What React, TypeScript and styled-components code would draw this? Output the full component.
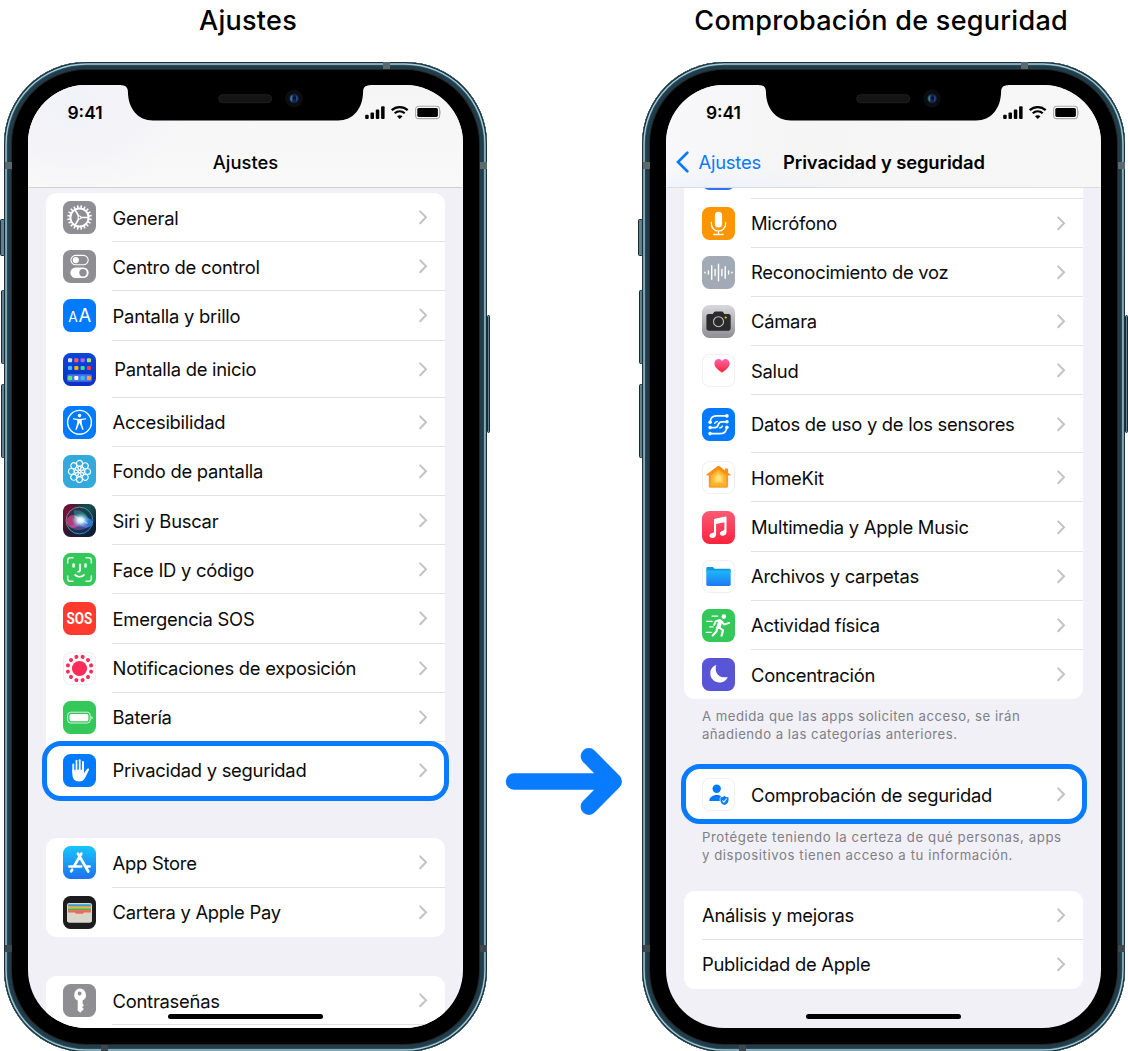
import React from "react";
import styled, { createGlobalStyle, css } from "styled-components";

const GlobalStyle = createGlobalStyle`
  * { box-sizing: border-box; }
  body { margin: 0; background: #fff; }
`;

const BLUE = "#087bff";

const Stage = styled.main`
  position: relative;
  display: flex;
  width: 1128px;
  height: 1051px;
  padding: 0 2.6px 0 4px;
  justify-content: space-between;
  overflow: hidden;
  background: #fff;
  color: #000;
  font-family: Inter, "Liberation Sans", sans-serif;
`;

const Column = styled.section`
  display: flex;
  flex-direction: column;
  flex: none;
  width: 483px;
`;

const Title = styled.h1<{ $shift: number }>`
  flex: none;
  margin: 0 0 0 ${(p) => p.$shift}px;
  height: 62px;
  padding-top: 5px;
  font-size: 27px;
  line-height: 32px;
  font-weight: 500;
  letter-spacing: 0.27px;
  text-align: center;
  white-space: nowrap;
`;

const Phone = styled.div`
  position: relative;
  flex: none;
  height: 990px;
  padding: 23px 24px 24px;
  border-radius: 82px;
  background: #000;
  box-shadow:
    inset 0 0 0 1.3px #19323d,
    inset 0 0 0 2.7px #a4cbd6,
    inset 0 0 0 3.4px #365a69,
    inset 0 0 0 7px #213d4c,
    inset 0 0 0 8px #252423;
`;

const SideButton = styled.span<{ $side: "left" | "right"; $top: number; $height: number; $out: number }>`
  position: absolute;
  ${(p) => p.$side}: ${(p) => -p.$out}px;
  top: ${(p) => p.$top}px;
  width: ${(p) => p.$out + 0.5}px;
  height: ${(p) => p.$height}px;
  border: 1px solid #162a34;
  border-radius: 1.5px;
  background: #64808f;
`;

const Antenna = styled.span<{ $x: number; $y: number; $dark?: boolean }>`
  position: absolute;
  left: ${(p) => p.$x}px;
  top: ${(p) => p.$y}px;
  width: 7px;
  height: 7px;
  background: ${(p) => (p.$dark ? "#3d484e" : "#5c6a70")};
`;

const Screen = styled.div`
  position: relative;
  display: flex;
  flex-direction: column;
  height: 943px;
  overflow: hidden;
  border-radius: 58px;
  background: #f1f0f6;
`;

const NotchArt = styled.svg`
  position: absolute;
  left: 0;
  top: 0;
  z-index: 2;
`;

const Header = styled.header<{ $tint?: boolean }>`
  flex: none;
  height: 103px;
  border-bottom: 1px solid ${(p) => (p.$tint ? "#dcdce0" : "#cfcfd4")};
  background: ${(p) =>
    p.$tint
      ? "radial-gradient(ellipse 120px 16px at 50px 100px, #edf3fc, rgba(237,243,252,0)), linear-gradient(90deg, #f8f8fa 0, #f5f5f6 30%, #f7f7f7 100%)"
      : "radial-gradient(ellipse 110px 90px at 45px 25px, #f1f1f9, rgba(241,241,249,0)), linear-gradient(#f5f5f6, #f9f9f9)"};
`;

const StatusBar = styled.div`
  display: flex;
  height: 55px;
  padding: 0 22px 0 39.5px;
  align-items: center;
  justify-content: space-between;
  font-size: 17.4px;
  font-weight: 600;
`;

const NavBar = styled.div`
  display: grid;
  grid-template-columns: 116px 1fr 116px;
  height: 44px;
  align-items: center;
`;

const BackLink = styled.span`
  display: flex;
  align-items: center;
  gap: 8.5px;
  padding-left: 9.5px;
  color: #0a7aff;
  font-size: 18.4px;
  letter-spacing: -0.2px;
`;

const NavTitle = styled.strong<{ $weight: number; $spacing: number }>`
  text-align: center;
  white-space: nowrap;
  font-size: 18.4px;
  font-weight: ${(p) => p.$weight};
  letter-spacing: ${(p) => p.$spacing}px;
`;

const Scroll = styled.div<{ $lead: number }>`
  flex: 1;
  min-height: 0;
  overflow: hidden;
  padding: 0 18px 0 17.5px;

  & > :first-child {
    margin-top: ${(p) => p.$lead}px;
  }
`;

const Card = styled.ul<{ $gap: number }>`
  list-style: none;
  margin: ${(p) => p.$gap}px 0 0;
  padding: 0;
  border-radius: 11px;
  background: #fff;
`;

const Item = styled.li<{ $height: number; $ring?: [number, number] }>`
  position: relative;
  display: flex;
  align-items: stretch;
  height: ${(p) => p.$height}px;
  padding-left: 17.7px;

  ${(p) =>
    p.$ring &&
    css`
      &::after {
        content: "";
        position: absolute;
        inset: ${-p.$ring[0]}px -4px ${-p.$ring[1]}px -3.2px;
        border: 5.5px solid ${BLUE};
        border-radius: 19px;
      }
    `}
`;

const Tile = styled.span<{ $bg: string; $outlined?: boolean }>`
  flex: none;
  align-self: center;
  width: 33px;
  height: 33px;
  margin-right: 16px;
  border-radius: 7.5px;
  background: ${(p) => p.$bg};
  box-shadow: ${(p) => (p.$outlined ? "inset 0 0 0 1px #f0f0f2" : "none")};

  svg {
    display: block;
    overflow: visible;
  }
`;

const ItemBody = styled.div<{ $line: boolean }>`
  display: flex;
  flex: 1;
  align-items: center;
  justify-content: space-between;
  padding-right: 17.5px;
  border-bottom: 1px solid ${(p) => (p.$line ? "#e2e2e5" : "transparent")};
`;

const Label = styled.span<{ $shift: number }>`
  padding-left: ${(p) => p.$shift}px;
  padding-top: 1px;
  font-size: 18.4px;
  line-height: 24px;
  letter-spacing: -0.26px;
  white-space: nowrap;
  color: #0b0b0b;
`;

const Footnote = styled.p<{ $gap: number }>`
  margin: ${(p) => p.$gap}px 0 0;
  padding-left: 18px;
  height: 36px;
  font-size: 13.2px;
  line-height: 18px;
  white-space: nowrap;
  color: #7f7f84;
`;

const Line = styled.span<{ $spacing: number }>`
  display: block;
  letter-spacing: ${(p) => p.$spacing}px;
`;

const HomeBar = styled.span`
  position: absolute;
  left: 140px;
  bottom: 9px;
  width: 155px;
  height: 5.5px;
  border-radius: 3px;
  background: #000;
`;

const Arrow = styled.svg`
  position: absolute;
  left: 500px;
  top: 742px;
`;

const Chevron = () => (
  <svg width="10" height="16" viewBox="0 0 10 16" fill="none" stroke="#c3c3c6" strokeWidth="2">
    <path d="M2.2 2.4 8 8.300l-5.800 5.900" strokeLinecap="round" />
  </svg>
);

const Svg = ({ children }: { children: React.ReactNode }) => (
  <svg width="33" height="33" viewBox="0 0 33 33" fill="none" stroke="none">
    {children}
  </svg>
);

const around = (n: number, start = 0) => Array.from({ length: n }, (_, i) => start + (360 / n) * i);

type Glyph = { bg: string; outlined?: boolean; art: React.ReactNode };

const glyphs: Record<string, Glyph> = {
  gear: {
    bg: "#8e8e93",
    art: (
      <g stroke="#fff">
        <circle cx="16.5" cy="16.5" r="9.1" strokeWidth="2" />
        {around(20, 9).map((a) => (
          <path key={a} d="M16.5 6.9V4.2" strokeWidth="1.6" transform={`rotate(${a} 16.5 16.5)`} />
        ))}
        {[90, 210, 330].map((a) => (
          <path key={a} d="M16.5 15V8" strokeWidth="1.7" transform={`rotate(${a} 16.5 16.5)`} />
        ))}
        <circle cx="16.5" cy="16.5" r="1.5" strokeWidth="1.1" />
      </g>
    ),
  },
  control: {
    bg: "#8e8e93",
    art: (
      <>
        <rect x="7.900" y="5.400" width="17.300" height="9.400" rx="4.700" stroke="#fff" strokeWidth="1.100" />
        <circle cx="12.800" cy="10.100" r="3.100" fill="#fff" />
        <rect x="7.400" y="17.600" width="18.300" height="10.400" rx="5.200" fill="#fff" />
        <circle cx="20" cy="22.800" r="3.700" fill="#8e8e93" />
      </>
    ),
  },
  display: {
    bg: "#007aff",
    art: (
      <g fill="#fff" fontFamily="Inter, sans-serif" fontWeight="400">
        <text x="5.300" y="23.300" fontSize="13.800">A</text>
        <text x="15.400" y="23.300" fontSize="18.400">A</text>
      </g>
    ),
  },
  home: {
    bg: "linear-gradient(#0a45dc, #0b32c4)",
    art: (
      <>
        <rect x="4" y="21.200" width="25" height="7.500" rx="2" fill="#4a74e6" />
        {[
          ["#ddd8cb", "#ff5b5f", "#b75cf5", "#b4e34c"],
          ["#2fc4f5", "#ffb300", "#35dda0", "#ff3a34"],
          ["#4df56c", "#ffffff", "#25c8f7", "#ff9d3d"],
        ].map((row, r) =>
          row.map((c, i) => (
            <rect key={`${r}${i}`} x={5 + i * 6.3} y={[5.2, 13, 22.9][r]} width="4.100" height="4.100" rx="1" fill={c} />
          )),
        )}
      </>
    ),
  },
  access: {
    bg: "#007aff",
    art: (
      <>
        <circle cx="16.500" cy="16.300" r="11.900" stroke="#fff" strokeWidth="1.400" />
        <circle cx="16.500" cy="9.600" r="1.800" fill="#fff" />
        <path
          d="M10.200 12.100c2.600.7 3.800.9 6.300.9s3.700-.2 6.300-.9l.3 1.100c-1.400.5-2.800.8-4.300 1-.1 2.700.1 4 1.900 9.200l-1.300.5-2.700-6.700h-.4l-2.700 6.700-1.300-.5c1.800-5.200 2-6.500 1.900-9.200-1.500-.2-2.900-.5-4.300-1z"
          fill="#fff"
        />
      </>
    ),
  },
  wallpaper: {
    bg: "#34aadc",
    art: (
      <g stroke="#fff" strokeWidth="1.100">
        {around(8).map((a) => (
          <circle key={a} cx="16.500" cy="8.400" r="3" transform={`rotate(${a} 16.5 16.5)`} />
        ))}
        {around(8).map((a) => (
          <ellipse key={a} cx="16.500" cy="13.200" rx="1.500" ry="2.300" strokeWidth=".9" transform={`rotate(${a} 16.5 16.5)`} />
        ))}
      </g>
    ),
  },
  siri: {
    bg: "radial-gradient(circle at 15% 25%, #7a1238 0, rgba(80,16,48,0) 50%), radial-gradient(circle at 75% 12%, #17524f 0, rgba(16,60,60,0) 45%), linear-gradient(100deg, #42122e, #102239 70%, #0b1b2c)",
    art: (
      <>
        <defs>
          <radialGradient id="siriCore">
            <stop offset="0" stopColor="#fff" />
            <stop offset=".35" stopColor="#d8f2ff" stopOpacity=".95" />
            <stop offset="1" stopColor="#5cbcf0" stopOpacity="0" />
          </radialGradient>
          <linearGradient id="siriRing" x1="0" y1="0" x2="1" y2=".6">
            <stop offset="0" stopColor="#d65b8e" />
            <stop offset=".45" stopColor="#35b99c" />
            <stop offset="1" stopColor="#3e7ee0" />
          </linearGradient>
        </defs>
        <circle cx="16.500" cy="16.500" r="13.400" fill="#163d5b" fillOpacity=".6" stroke="url(#siriRing)" strokeWidth=".9" />
        <ellipse cx="10.300" cy="17.500" rx="6.800" ry="6.400" fill="#e0407e" fillOpacity=".75" />
        <ellipse cx="23" cy="18.800" rx="6.500" ry="5" fill="#3a8df0" fillOpacity=".75" />
        <path d="M6 22c5-1 8-4 11-9 2 5 5 8 9 9-5 5-14 6-20 0z" fill="#a668de" fillOpacity=".4" />
        <path d="M11 6c8 0 12 3 14 8-5-1-11 0-14 3z" fill="#2ac2a4" fillOpacity=".4" />
        <ellipse cx="17.500" cy="16.200" rx="9" ry="7.500" fill="url(#siriCore)" />
        <path d="M12 12.500 24.500 19.500" stroke="#fff" strokeOpacity=".5" strokeWidth="1.200" />
      </>
    ),
  },
  face: {
    bg: "#34c759",
    art: (
      <g stroke="#fff" strokeWidth="1.500" strokeLinecap="round">
        <path d="M4.700 10V7.300A2.600 2.600 0 0 1 7.300 4.700H10M23 4.700h2.700a2.600 2.600 0 0 1 2.600 2.600V10M28.300 23v2.700a2.600 2.600 0 0 1-2.600 2.600H23M10 28.300H7.300a2.600 2.600 0 0 1-2.600-2.600V23" strokeOpacity=".85" />
        <path d="M10.600 11.600v2M22.500 11.600v2" strokeWidth="2.500" />
        <path d="M17 11.300v6c0 1-.6 1.400-1.800 1.400M12.200 22c2.500 2.200 6.200 2.200 8.700 0" strokeWidth="1.800" />
      </g>
    ),
  },
  sos: {
    bg: "#ff3b30",
    art: (
      <text x="3.600" y="22.300" fill="#fff" fontFamily="Roboto, sans-serif" fontWeight="700" fontSize="16.400" textLength="25.800" lengthAdjust="spacingAndGlyphs">
        SOS
      </text>
    ),
  },
  exposure: {
    bg: "#fff",
    outlined: true,
    art: (
      <g fill="#fb2d57">
        <circle cx="16.500" cy="16.500" r="7.600" />
        {around(12, 15).map((a) => (
          <circle key={a} cx="16.500" cy="4.500" r="2" transform={`rotate(${a} 16.5 16.5)`} />
        ))}
      </g>
    ),
  },
  battery: {
    bg: "#34c759",
    art: (
      <>
        <rect x="4.700" y="11.200" width="22.500" height="10.800" rx="3" stroke="#fff" strokeOpacity=".8" />
        <rect x="6.600" y="13" width="18.800" height="7.200" rx="1.500" fill="#fff" />
        <path d="M28.500 14.900c1.500.5 1.500 3 0 3.500z" fill="#fff" />
      </>
    ),
  },
  hand: {
    bg: "#007aff",
    art: (
      <>
        <path d="M10.400 18.500V10.500M13.500 17V7M16.700 17V6.300M19.900 17V8" stroke="#fff" strokeWidth="2.100" strokeLinecap="round" />
        <path
          d="M9.350 15.500h11.600v3.700l3-4.100c.8-1 2.500-.5 2 .8l-3.400 7.200c-1.400 3-3.500 4.500-6.500 4.500-4.500 0-6.700-3-6.700-7.500z"
          fill="#fff"
        />
        <path d="M11.950 8.500v7.800M15.100 7v8.800M18.300 7v8.800" stroke="#007aff" strokeWidth=".9" />
      </>
    ),
  },
  appstore: {
    bg: "linear-gradient(#1ac4fb, #1c72f1)",
    art: (
      <path
        d="M18.300 7.700 11.400 19.600M15 7.700 25.300 25.500M6.400 20.500h11.800M22.600 20.500h4M9.200 23.600l-1 1.700"
        stroke="#fff"
        strokeWidth="2.700"
        strokeLinecap="round"
      />
    ),
  },
  wallet: {
    bg: "#1c1c1e",
    art: (
      <>
        <rect x="4" y="7" width="25" height="19.500" rx="2.300" fill="#d9d7cb" />
        <path d="M5 10V9.400Q5 8.200 6.300 8.200h20.400Q28 8.200 28 9.400V10.800H5z" fill="#3a9bdc" />
        <path d="M5 10.400h23v2H5z" fill="#f9b32b" />
        <path d="M5 12.400h23v2.200H5z" fill="#43b649" />
        <path d="M5 14.300h23v3.500H5z" fill="#f2685b" />
        <path d="M4 16.500h6.800c1.400 0 1.800.7 2.600 1.700 1.600 2 4.600 2 6.200 0 .8-1 1.200-1.700 2.600-1.700H29v7.700q0 2.300-2.300 2.300H6.300Q4 26.500 4 24.200z" fill="#d9d7cb" />
      </>
    ),
  },
  key: {
    bg: "#8e8e93",
    art: (
      <path
        fillRule="evenodd"
        d="M16.600 4.600a6.400 6.400 0 0 1 3 12v3.100l1.400 1.500-1.900 2 1.700 1.900-3.600 3.600-2.500-2.200v-9.900a6.400 6.400 0 0 1 1.900-12zm0 3a1.900 1.900 0 1 0 0 3.800 1.900 1.900 0 0 0 0-3.800z"
        fill="#fff"
      />
    ),
  },
  contacts: { bg: "#2c74f5", art: null },
  mic: {
    bg: "#ff9500",
    art: (
      <>
        <rect x="12.900" y="4.800" width="7.200" height="15.800" rx="3.600" fill="#fff" />
        <path d="M9.400 15.500v1.500a7.100 7.100 0 0 0 14.200 0v-1.500M16.500 24.200v3.200M11.800 27.500h9.400" stroke="#fff" strokeWidth="1.300" strokeLinecap="round" />
      </>
    ),
  },
  wave: {
    bg: "#a2aab5",
    art: (
      <path
        d="M3 16.100v.8M6.400 14.900v3.200M9.700 9.800v13.400M13.100 13.500v6M16.500 8.300v16.400M19.900 13.300v6.400M23.200 10.800v11.400M26.600 14.900v3.200M30 16.100v.8"
        stroke="#fff"
        strokeWidth="1.400"
        strokeLinecap="round"
      />
    ),
  },
  camera: {
    bg: "linear-gradient(#d8d8dc, #8e8e94)",
    art: (
      <>
        <path
          d="M6.500 9h4.300l1.200-1.700q.5-.7 1.400-.7h6.400q.9 0 1.400.7L22.400 9h4.200q2.100 0 2.100 2.100v12.500q0 2.100-2.100 2.100H6.500q-2.100 0-2.100-2.100V11.100Q4.400 9 6.500 9z"
          fill="#2a2a2b"
        />
        <circle cx="16.500" cy="16.700" r="5" stroke="#c3c3c6" strokeWidth="1.100" />
        <circle cx="23.700" cy="12.500" r="1.100" fill="#ffcc00" />
      </>
    ),
  },
  heart: {
    bg: "#fff",
    outlined: true,
    art: (
      <>
        <defs>
          <linearGradient id="heartFill" x1="0" y1="0" x2="0" y2="1">
            <stop offset="0" stopColor="#ff63ad" />
            <stop offset="1" stopColor="#fb2434" />
          </linearGradient>
        </defs>
        <path d="M20 18.700c-4.200-3-7.600-5.500-7.600-9.200 0-4.800 5.500-6 7.600-2.500 2.100-3.500 7.600-2.300 7.600 2.500 0 3.700-3.400 6.200-7.600 9.200z" fill="url(#heartFill)" />
      </>
    ),
  },
  sensors: {
    bg: "#007aff",
    art: (
      <>
        <path
          d="M8.200 14.200C8.400 9.500 11 7.900 14.500 7.900h10.200M8.200 19.600h4.600c2.600 0 3-1.200 3.400-2.900.5-2 1.600-2.900 3.700-2.900h4.800M24.700 19.300c-.2 4.700-2.800 6.300-6.300 6.300H8.200"
          stroke="#fff"
          strokeWidth="1.700"
        />
        <path d="M12.600 15.500c.4-1.300 1.300-1.900 2.700-2M20.400 18c-.4 1.300-1.300 1.900-2.700 2" stroke="#fff" strokeWidth="1.300" strokeLinecap="round" />
        {[[24.9, 7.9], [8.1, 14.3], [24.9, 13.8], [8.1, 19.6], [24.9, 19.3], [8.1, 25.6]].map(([x, y]) => (
          <circle key={`${x}-${y}`} cx={x} cy={y} r="1.800" fill="#fff" />
        ))}
      </>
    ),
  },
  house: {
    bg: "#fff",
    outlined: true,
    art: (
      <>
        <defs>
          <linearGradient id="houseFill" x1="0" y1="0" x2="0" y2="1">
            <stop offset="0" stopColor="#f88a12" />
            <stop offset="1" stopColor="#fda32a" />
          </linearGradient>
        </defs>
        <path
          d="M15.700 5q.8-.6 1.600 0l5.700 4.400V8q0-.6.600-.6h1.900q.6 0 .6.600v3.700l2.300 1.800q.7.800-.2 1.100h-2.100v10.700q0 1.500-1.500 1.500H8.300q-1.500 0-1.500-1.500V14.600H4.700q-.9-.3-.2-1.100z"
          fill="url(#houseFill)"
        />
        <path d="M16.500 8.600 8.900 14.600v8.900q0 .9.900.9h13.400q.9 0 .9-.9v-8.900z" fill="#feb331" />
        <path d="m16.500 11.200-4.800 3.900v6.700h9.600v-6.700z" fill="#ffca4e" />
        <path d="m16.500 13.600-2.900 2.400v4.400h5.800V16z" fill="#ffe27c" />
      </>
    ),
  },
  music: {
    bg: "linear-gradient(#fb5b74, #fa233b)",
    art: (
      <path
        d="M12 8.800q0-.9.900-1.100l10.600-2.200q1-.2 1 .7v15.100c0 2-1.500 3.200-3.400 3.500-2 .3-3.400-.8-3.200-2.500.2-1.500 1.300-2.200 3-2.600 1.300-.3 1.500-.6 1.500-1.600v-6.800l-8.300 1.700v10.400c0 2-1.500 3.300-3.400 3.500-2 .3-3.400-.8-3.200-2.500.2-1.500 1.300-2.200 3-2.500 1.300-.3 1.500-.7 1.500-1.700z"
        fill="#fff"
      />
    ),
  },
  folder: {
    bg: "#fff",
    outlined: true,
    art: (
      <>
        <defs>
          <linearGradient id="folderFill" x1="0" y1="0" x2="0" y2="1">
            <stop offset="0" stopColor="#1cb8fb" />
            <stop offset="1" stopColor="#1d78f2" />
          </linearGradient>
        </defs>
        <path d="M4.300 12V8.400q0-1.300 1.300-1.300h5.200l1.900 1.600h14.700q1.300 0 1.300 1.300v2z" fill="#1398df" />
        <path d="M4.300 10.600h24.400v13.700q0 1.700-1.700 1.700H6q-1.700 0-1.700-1.700z" fill="url(#folderFill)" />
      </>
    ),
  },
  run: {
    bg: "#34c759",
    art: (
      <g stroke="#fff" strokeLinecap="round" strokeLinejoin="round">
        <circle cx="21.800" cy="7.600" r="2.300" fill="#fff" stroke="none" />
        <path d="M18.300 12.600 16.500 18" strokeWidth="4" />
        <path d="m17.800 11-4.200 1.300-1.400 3.600M19.800 12.400l2.200 3.200 5.200-1.700" strokeWidth="1.900" />
        <path d="m17.300 18.600 3.700 2.800-1.500 5.300M15.300 18.600l-.9 4-3.700 3.900" strokeWidth="2.200" />
        <path d="M10 7.100h5.700M4.700 12.400h5.500M7.700 17.800h3.600M4.200 23.300h5.200" strokeWidth="1.200" />
      </g>
    ),
  },
  moon: {
    bg: "#5856d6",
    art: <path d="M14.300 7C10.500 8.300 8.300 11.500 8.300 15.200c0 5.200 4 9.200 9.200 9.200 3.900 0 7-2.200 8.200-5.500-6.800 1.800-12-2.400-12-8.200 0-1.400.2-2.500.6-3.700z" fill="#fff" />,
  },
  safety: {
    bg: "#fff",
    outlined: true,
    art: (
      <>
        <circle cx="14.700" cy="10.800" r="4.200" fill="#007aff" />
        <path d="M7.300 22.900c0-3.500 3.300-5.900 7.300-5.900 1.900 0 3.500.5 4.800 1.400-1.300.4-1.700.9-1.700 1.800v2.700z" fill="#007aff" />
        <path d="M22.400 17.900c1.200.9 2.300 1.200 4.100 1.300v3c0 2.300-1.700 3.800-4.100 4.800-2.400-1-4-2.500-4-4.800v-3c1.800-.1 2.900-.4 4-1.300z" fill="#007aff" />
        <path d="m20.400 22.500 1.500 1.700 2.800-3.700" stroke="#fff" strokeWidth="1.100" />
      </>
    ),
  },
};

const StatusIcons = () => (
  <svg width="77" height="15" viewBox="0 0 77 15" fill="none">
    <rect x="1.200" y="9.700" width="3.500" height="4.300" rx="1" fill="#000" />
    <rect x="6.500" y="7.500" width="3.500" height="6.500" rx="1" fill="#000" />
    <rect x="11.800" y="4.500" width="3.500" height="9.500" rx="1" fill="#000" />
    <rect x="17.100" y="1.200" width="3.500" height="12.800" rx="1" fill="#000" />
    <path d="M27.700 5.100c4.500-4.100 11.500-4.100 16 0M30.700 8.300c2.900-2.600 7.100-2.600 10 0" stroke="#000" strokeWidth="2.200" />
    <path d="M33 11.200c1.600-1.300 3.900-1.300 5.500 0l-2.750 2.900z" fill="#000" />
    <rect x="51.600" y="1.300" width="24" height="12.300" rx="3.200" stroke="#aaa" strokeWidth="1.100" />
    <rect x="53.300" y="3" width="20.600" height="8.900" rx="1.600" fill="#000" />
    <path d="M76.500 5.500c1.100.5 1.100 3.500 0 4z" fill="#aaa" />
  </svg>
);

const Notch = () => (
  <NotchArt width="435" height="40" viewBox="0 0 435 40">
    <path d="M93-1V.2c4.500 0 6.800 2 6.900 6.300C100.200 24 110 35.500 125 35.500h185c15 0 24.800-11.500 25.100-29 .1-4.300 2.400-6.300 6.900-6.300V-1z" fill="#000" />
    <rect x="190.700" y="9.700" width="53" height="8" rx="4" fill="#141414" stroke="#242424" strokeWidth=".8" />
    <circle cx="266" cy="13.500" r="9" fill="#0c0d0f" />
    <circle cx="266" cy="13.500" r="4.800" fill="#14254a" />
    <path d="M264.500 10c-3 1-3.300 5.500-.3 7z" fill="#3d6f9e" />
    <path d="M268 10.500c2.500 1.200 2.600 4.800 0 6.200z" fill="#27408c" />
    <circle cx="266.600" cy="13" r="1.500" fill="#0a0c1c" />
  </NotchArt>
);

type Entry = { icon?: string; text: string; tall?: number; ring?: [number, number]; shift?: number };

const ROW = 49.2;

const SettingsCard = ({ gap, rows, openEnd }: { gap: number; rows: Entry[]; openEnd?: boolean }) => (
  <Card $gap={gap}>
    {rows.map((row, i) => {
      const glyph = row.icon ? glyphs[row.icon] : undefined;
      return (
        <Item key={row.text} $height={row.tall ?? ROW} $ring={row.ring}>
          {glyph && (
            <Tile $bg={glyph.bg} $outlined={glyph.outlined}>
              <Svg>{glyph.art}</Svg>
            </Tile>
          )}
          <ItemBody $line={openEnd || i < rows.length - 1}>
            <Label $shift={row.shift ?? 0.4}>{row.text}</Label>
            <Chevron />
          </ItemBody>
        </Item>
      );
    })}
  </Card>
);

const Hardware = () => (
  <>
    <SideButton $side="left" $top={157} $height={37} $out={4} />
    <SideButton $side="left" $top={228} $height={74} $out={3} />
    <SideButton $side="left" $top={322} $height={74} $out={3} />
    <SideButton $side="right" $top={253} $height={118} $out={3} />
    <Antenna $x={0.5} $y={100} />
    <Antenna $x={475.5} $y={100} />
    <Antenna $x={378.5} $y={0} />
    <Antenna $x={0.5} $y={883} $dark />
    <Antenna $x={475.5} $y={883} $dark />
    <Antenna $x={97} $y={983} $dark />
  </>
);

const Device = ({ header, tint, lead, children }: { header: React.ReactNode; tint?: boolean; lead: number; children: React.ReactNode }) => (
  <Phone>
    <Hardware />
    <Screen>
      <Notch />
      <Header $tint={tint}>
        <StatusBar>
          <span>9:41</span>
          <StatusIcons />
        </StatusBar>
        <NavBar>{header}</NavBar>
      </Header>
      <Scroll $lead={lead}>{children}</Scroll>
      <HomeBar />
    </Screen>
  </Phone>
);

export default function App() {
  return (
    <>
      <GlobalStyle />
      <Stage>
        <Column>
          <Title $shift={5}>Ajustes</Title>
          <Device
            lead={5}
            header={
              <>
                <span />
                <NavTitle $weight={500} $spacing={0}>Ajustes</NavTitle>
              </>
            }
          >
            <SettingsCard
              gap={5}
              rows={[
                { icon: "gear", text: "General" },
                { icon: "control", text: "Centro de control" },
                { icon: "display", text: "Pantalla y brillo" },
                { icon: "home", text: "Pantalla de inicio", tall: 57, shift: 2 },
                { icon: "access", text: "Accesibilidad" },
                { icon: "wallpaper", text: "Fondo de pantalla" },
                { icon: "siri", text: "Siri y Buscar" },
                { icon: "face", text: "Face ID y código" },
                { icon: "sos", text: "Emergencia SOS" },
                { icon: "exposure", text: "Notificaciones de exposición" },
                { icon: "battery", text: "Batería" },
                { icon: "hand", text: "Privacidad y seguridad", tall: 56.5, ring: [1, 2.7] },
              ]}
            />
            <SettingsCard
              gap={40}
              rows={[
                { icon: "appstore", text: "App Store" },
                { icon: "wallet", text: "Cartera y Apple Pay" },
              ]}
            />
            <SettingsCard gap={39.2} openEnd rows={[{ icon: "key", text: "Contraseñas" }, { text: " ", tall: 30 }]} />
          </Device>
        </Column>
        <Column>
          <Title $shift={-5.5}>Comprobación de seguridad</Title>
          <Device
            tint
            lead={-38.7}
            header={
              <>
                <BackLink>
                  <svg width="14" height="22" viewBox="0 0 14 22" fill="none" stroke="#0a7aff" strokeWidth="2.700" strokeLinecap="round">
                    <path d="M11.300 1.800 2 11l9.300 9.200" />
                  </svg>
                  Ajustes
                </BackLink>
                <NavTitle $weight={600} $spacing={-0.1}>Privacidad y seguridad</NavTitle>
              </>
            }
          >
            <SettingsCard
              gap={0}
              rows={[
                { icon: "contacts", text: " " },
                { icon: "mic", text: "Micrófono" },
                { icon: "wave", text: "Reconocimiento de voz" },
                { icon: "camera", text: "Cámara" },
                { icon: "heart", text: "Salud" },
                { icon: "sensors", text: "Datos de uso y de los sensores", tall: 58 },
                { icon: "house", text: "HomeKit" },
                { icon: "music", text: "Multimedia y Apple Music" },
                { icon: "folder", text: "Archivos y carpetas" },
                { icon: "run", text: "Actividad física" },
                { icon: "moon", text: "Concentración" },
              ]}
            />
            <Footnote $gap={7.7}>
              <Line $spacing={0.5}>A medida que las apps soliciten acceso, se irán</Line>
              <Line $spacing={0.48}>añadiendo a las categorías anteriores.</Line>
            </Footnote>
            <SettingsCard gap={25} rows={[{ icon: "safety", text: "Comprobación de seguridad", tall: 54, ring: [4, 2] }]} />
            <Footnote $gap={5.7}>
              <Line $spacing={0.59}>Protégete teniendo la certeza de qué personas, apps</Line>
              <Line $spacing={0.58}>y dispositivos tienen acceso a tu información.</Line>
            </Footnote>
            <SettingsCard gap={27} rows={[{ text: "Análisis y mejoras" }, { text: "Publicidad de Apple" }]} />
          </Device>
        </Column>
        <Arrow width="130" height="80" viewBox="500 742 130 80" fill="none" stroke={BLUE} strokeWidth="16.300" strokeLinecap="round" strokeLinejoin="round">
          <path d="M513.900 781.500H612M588.800 756.200l25 25.300-25 25.300" />
        </Arrow>
      </Stage>
    </>
  );
}
